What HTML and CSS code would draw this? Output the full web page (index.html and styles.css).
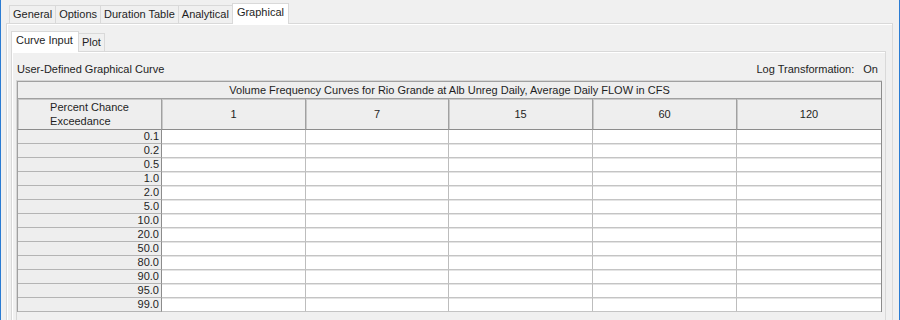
FILE: index.html
```html
<!DOCTYPE html>
<html>
<head>
<meta charset="utf-8">
<link rel="stylesheet" href="styles.css">
</head>
<body>
<div class="window">
  <div class="tabs outer-tabs">
    <div class="tab">General</div>
    <div class="tab">Options</div>
    <div class="tab">Duration Table</div>
    <div class="tab">Analytical</div>
    <div class="tab active">Graphical</div>
  </div>
  <div class="panel outer-panel">
    <div class="tabs inner-tabs">
      <div class="tab active">Curve Input</div>
      <div class="tab">Plot</div>
    </div>
    <div class="panel inner-panel">
      <div class="info-row">
        <span>User-Defined Graphical Curve</span>
        <span class="log">Log Transformation:<span class="on">On</span></span>
      </div>
      <div class="scroll">
        <table class="grid">
          <colgroup>
            <col class="c0"><col class="c1"><col class="c2"><col class="c3"><col class="c4"><col class="c5">
          </colgroup>
          <thead>
            <tr class="title-row"><th colspan="6">Volume Frequency Curves for Rio Grande at Alb Unreg Daily, Average Daily FLOW in CFS</th></tr>
            <tr class="head-row">
              <th><span class="two-line">Percent Chance<br>Exceedance</span></th>
              <th>1</th><th>7</th><th>15</th><th>60</th><th>120</th>
            </tr>
          </thead>
          <tbody>
            <tr><th>0.1</th><td></td><td></td><td></td><td></td><td></td></tr>
            <tr><th>0.2</th><td></td><td></td><td></td><td></td><td></td></tr>
            <tr><th>0.5</th><td></td><td></td><td></td><td></td><td></td></tr>
            <tr><th>1.0</th><td></td><td></td><td></td><td></td><td></td></tr>
            <tr><th>2.0</th><td></td><td></td><td></td><td></td><td></td></tr>
            <tr><th>5.0</th><td></td><td></td><td></td><td></td><td></td></tr>
            <tr><th>10.0</th><td></td><td></td><td></td><td></td><td></td></tr>
            <tr><th>20.0</th><td></td><td></td><td></td><td></td><td></td></tr>
            <tr><th>50.0</th><td></td><td></td><td></td><td></td><td></td></tr>
            <tr><th>80.0</th><td></td><td></td><td></td><td></td><td></td></tr>
            <tr><th>90.0</th><td></td><td></td><td></td><td></td><td></td></tr>
            <tr><th>95.0</th><td></td><td></td><td></td><td></td><td></td></tr>
            <tr><th>99.0</th><td></td><td></td><td></td><td></td><td></td></tr>
          </tbody>
        </table>
      </div>
    </div>
  </div>
</div>
</body>
</html>
```
FILE: styles.css
```css
html, body {
  margin: 0;
  padding: 0;
  background: #f0f0f0;
}
body {
  font-family: "Liberation Sans", Arial, sans-serif;
  font-size: 11px;
  color: #1e1e1e;
}
.window {
  width: 900px;
  height: 320px;
  box-sizing: border-box;
  border-left: 1px solid #2b7cd3;
  border-right: 1px solid #2b7cd3;
  padding: 3px 6px 0 5px;
  overflow: hidden;
}
.tabs {
  display: flex;
  align-items: flex-end;
}
.outer-tabs {
  padding-left: 3px;
  height: 20px;
}
.tab {
  box-sizing: border-box;
  height: 18px;
  line-height: 16px;
  padding: 0 3px;
  border: 1px solid #d9d9d9;
  border-bottom: none;
  margin-right: -1px;
  background: #f0f0f0;
  white-space: nowrap;
}
.tab.active {
  height: 21px;
  line-height: 17px;
  background: #ffffff;
  margin-bottom: -1px;
  position: relative;
  z-index: 1;
}
.outer-tabs .tab.active {
  padding: 0 4px;
}
.panel {
  border: 1px solid #d9d9d9;
  box-shadow: inset 1px 1px #ffffff;
  background: #f0f0f0;
}
.outer-panel {
  height: 320px;
  padding: 7px 6px 0 4px;
}
.inner-tabs {
  height: 20px;
}
.inner-tabs .tab.active {
  padding: 0 5px 0 4px;
}
.inner-panel {
  height: 300px;
  padding: 11px 3px 0 4px;
}
.info-row {
  display: flex;
  justify-content: space-between;
  height: 13px;
  line-height: 13px;
  padding: 0 4px 0 1px;
  margin-bottom: 4px;
}
.log .on {
  margin-left: 9px;
}
.scroll {
  border: 1px solid #d6d6d6;
  border-right: none;
  height: 300px;
  background: #f0f0f0;
}
.grid {
  border-collapse: separate;
  border-spacing: 0;
  table-layout: fixed;
  width: 864px;
  border-left: 1px solid #a0a0a0;
  border-top: 1px solid #a0a0a0;
  border-right: 1px solid #8c8c8c;
}
.c0 { width: 144px; }
.c1 { width: 144px; }
.c2 { width: 143px; }
.c3 { width: 144px; }
.c4 { width: 144px; }
.c5 { width: 144px; }
th {
  font-weight: normal;
  background: #eeeeee;
  padding: 0;
}
.title-row th {
  height: 16px;
  line-height: 16px;
  text-align: center;
  border-bottom: 1px solid #a0a0a0;
}
.head-row th {
  height: 30px;
  text-align: center;
  border-bottom: 1px solid #8c8c8c;
  border-right: 1px solid #a0a0a0;
  box-shadow: inset 1px 1px #c8c8c8;
}
.head-row th:last-child {
  border-right: none;
}
.two-line {
  display: inline-block;
  text-align: left;
  line-height: 14px;
}
tbody th {
  height: 13px;
  line-height: 13px;
  text-align: right;
  padding-right: 2px;
  border-right: 1px solid #8c8c8c;
  border-bottom: 1px solid #b4b4b4;
}
tbody td {
  height: 13px;
  padding: 0;
  background: #ffffff;
  border-right: 1px solid #bdbdbd;
  border-bottom: 1px solid #c4c4c4;
  box-shadow: inset 0 1px #e4e4e4;
}
tbody tr:first-child td {
  box-shadow: none;
}
tbody td:last-child {
  border-right: none;
}
```
